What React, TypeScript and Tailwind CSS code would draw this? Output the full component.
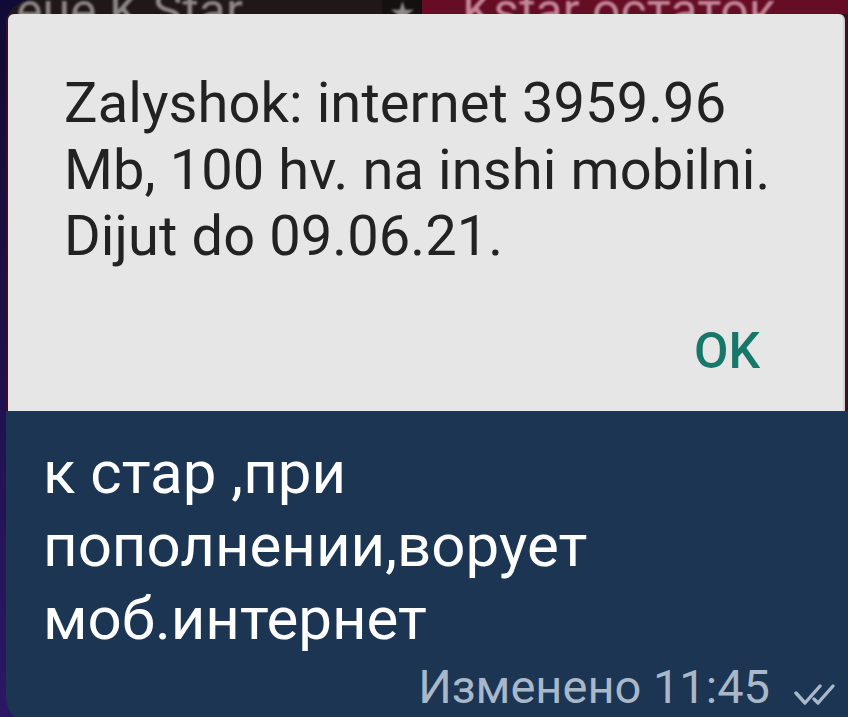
import React from "react";

function DoubleCheck() {
  return (
    <svg width="42" height="24" viewBox="0 0 42 24" fill="none" className="mb-[3px] ml-[24px]">
      <path d="M2 10 L11 20 L26 3" stroke="#a9b8c9" strokeWidth="3.4" strokeLinecap="round" strokeLinejoin="round" />
      <path d="M20 16 L24 20 L39 3" stroke="#a9b8c9" strokeWidth="3.4" strokeLinecap="round" strokeLinejoin="round" />
    </svg>
  );
}

export default function App() {
  return (
    <div
      className="h-[717px] w-[848px] overflow-hidden bg-linear-to-b from-[#100b36] to-[#2c1764] pl-[6px]"
      style={{ fontFamily: "Roboto, 'Noto Sans', sans-serif" }}
    >
      <div className="h-[725px] w-[850px] overflow-hidden rounded-tl-[26px] rounded-bl-[28px] bg-[#1b3553]">
        {/* photo */}
        <div className="flex h-[411px] flex-col bg-[#23324f]">
          <div className="flex h-[14px] shrink-0 overflow-hidden">
            <div className="flex w-[376px] items-end bg-[#201818] pl-[10px]">
              <span className="mb-[-22px] text-[50px] leading-none text-[#8d8686] blur-[1px]">eue K Star</span>
            </div>
            <div className="flex w-[40px] items-end justify-center bg-[#141010]">
              <span className="mb-[-14px] text-[30px] leading-none text-[#8f8a8a] blur-[1px]">★</span>
            </div>
            <div className="flex flex-1 items-end bg-[#660c25] pl-[40px]">
              <span className="mb-[-22px] text-[50px] leading-none text-[#c4889a] blur-[1px]">Kstar остаток</span>
            </div>
          </div>
          <div className="flex flex-1 bg-[#3b0f1f]">
            <div className="ml-[2px] flex w-[837px] flex-col rounded-t-[6px] border-r-2 border-[#d0d0d0] bg-[#e6e6e6] pl-[56px] pt-[56px]">
              <p className="text-[56px] leading-[66.5px] tracking-[0.1px] text-[#222222]">
                Zalyshok: internet 3959.96
                <br />
                Mb, 100 hv. na inshi mobilni.
                <br />
                Dijut do 09.06.21.
              </p>
              <div className="mt-[56px] flex justify-end pr-[83px]">
                <span className="text-[50px] font-medium leading-none text-[#17786a]">OK</span>
              </div>
            </div>
          </div>
        </div>
        {/* caption */}
        <div className="pl-[37px] pt-[25px]">
          <p className="text-[60px] leading-[73px] text-white">
            к стар ,при
            <br />
            пополнении,ворует
            <br />
            моб.интернет
          </p>
        </div>
        <div className="mt-[8px] flex w-[842px] items-end justify-end pr-[12px]">
          <span className="text-[47px] leading-none text-[#a9b8c9]">Изменено 11:45</span>
          <DoubleCheck />
        </div>
      </div>
    </div>
  );
}
